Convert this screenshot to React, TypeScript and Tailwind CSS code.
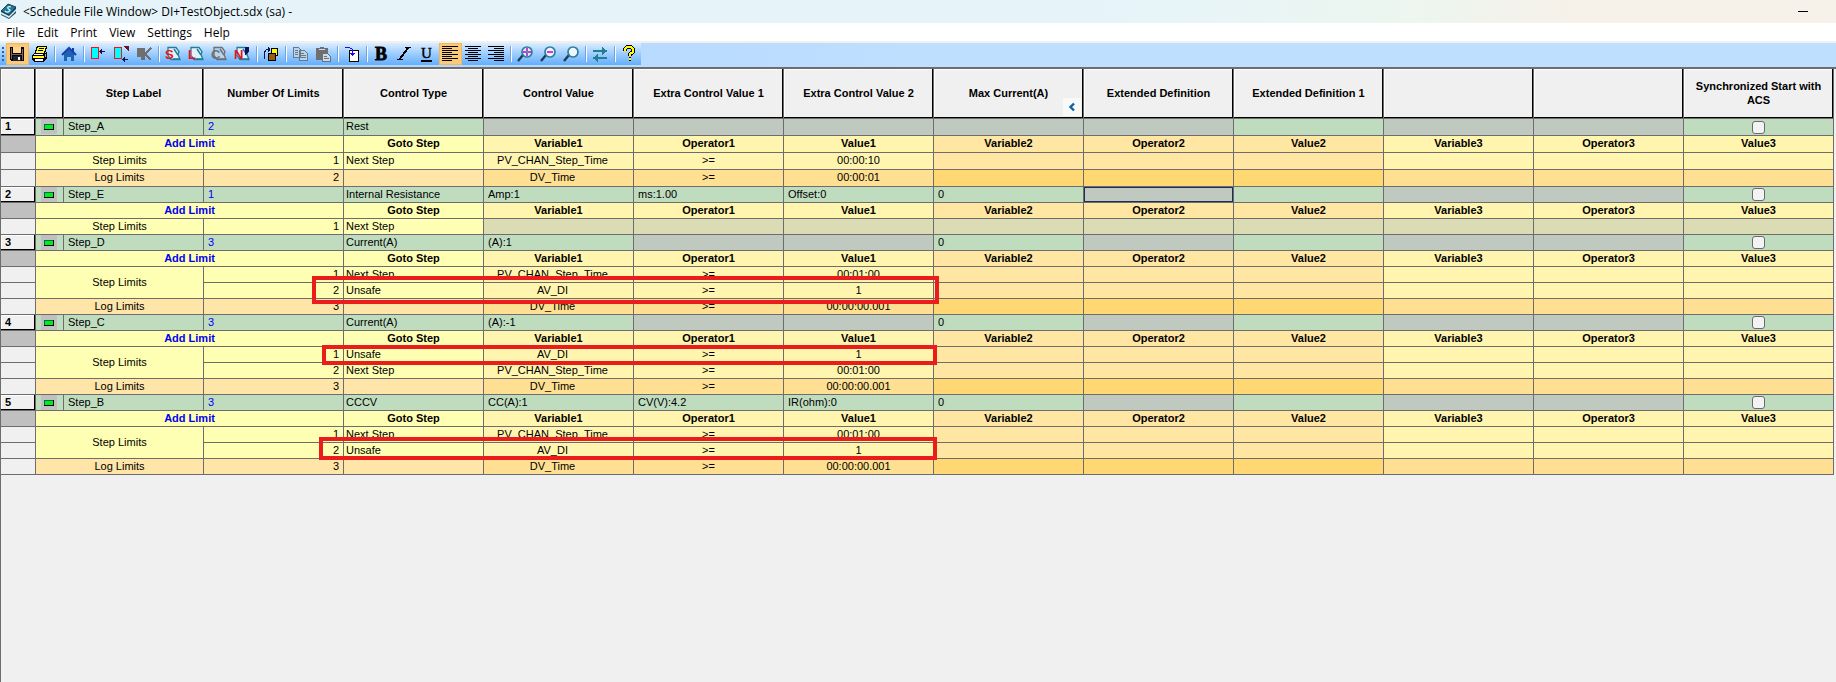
import React from 'react';

type Limit = { n: number; goto?: string; variable?: string; op?: string; value?: string };
type Step = {
  label: string;
  type: string;
  control: (string | null)[];
  stepLimits: Limit[];
  logLimits: Limit[];
  tall?: boolean;
  selected?: boolean;
};

const steps: Step[] = [
  {
    label: 'Step_A',
    type: 'Rest',
    control: [null, null, null, null],
    stepLimits: [{ n: 1, goto: 'Next Step', variable: 'PV_CHAN_Step_Time', op: '>=', value: '00:00:10' }],
    logLimits: [{ n: 2, variable: 'DV_Time', op: '>=', value: '00:00:01' }],
    tall: true,
  },
  {
    label: 'Step_E',
    type: 'Internal Resistance',
    control: ['Amp:1', 'ms:1.00', 'Offset:0', '0'],
    stepLimits: [{ n: 1, goto: 'Next Step' }],
    logLimits: [],
    selected: true,
  },
  {
    label: 'Step_D',
    type: 'Current(A)',
    control: ['(A):1', null, null, '0'],
    stepLimits: [
      { n: 1, goto: 'Next Step', variable: 'PV_CHAN_Step_Time', op: '>=', value: '00:01:00' },
      { n: 2, goto: 'Unsafe', variable: 'AV_DI', op: '>=', value: '1' },
    ],
    logLimits: [{ n: 3, variable: 'DV_Time', op: '>=', value: '00:00:00.001' }],
  },
  {
    label: 'Step_C',
    type: 'Current(A)',
    control: ['(A):-1', null, null, '0'],
    stepLimits: [
      { n: 1, goto: 'Unsafe', variable: 'AV_DI', op: '>=', value: '1' },
      { n: 2, goto: 'Next Step', variable: 'PV_CHAN_Step_Time', op: '>=', value: '00:01:00' },
    ],
    logLimits: [{ n: 3, variable: 'DV_Time', op: '>=', value: '00:00:00.001' }],
  },
  {
    label: 'Step_B',
    type: 'CCCV',
    control: ['CC(A):1', 'CV(V):4.2', 'IR(ohm):0', '0'],
    stepLimits: [
      { n: 1, goto: 'Next Step', variable: 'PV_CHAN_Step_Time', op: '>=', value: '00:01:00' },
      { n: 2, goto: 'Unsafe', variable: 'AV_DI', op: '>=', value: '1' },
    ],
    logLimits: [{ n: 3, variable: 'DV_Time', op: '>=', value: '00:00:00.001' }],
  },
];

const headers = [
  '', '', 'Step Label', 'Number Of Limits', 'Control Type', 'Control Value',
  'Extra Control Value 1', 'Extra Control Value 2', 'Max Current(A)',
  'Extended Definition', 'Extended Definition 1', '', '', 'Synchronized Start with ACS',
];

const limitHeads = [
  'Variable1', 'Operator1', 'Value1', 'Variable2', 'Operator2', 'Value2', 'Variable3', 'Operator3', 'Value3',
];

const cell = 'border-r border-b border-[#6d6d6d] p-0 whitespace-nowrap overflow-hidden';
const raised = 'bg-[#f0f0f0] shadow-[inset_-1px_-1px_0_#000,inset_1px_1px_0_#fff]';
const green = 'bg-[#bfdcbf]';
const grey = 'bg-[#bfc9bf]';

const stepTone = (i: number) => (i >= 3 && i < 6 ? 'bg-[#ffe6a3]' : 'bg-[#fff5ae]');
const logTone = (i: number) => (i >= 3 && i < 6 ? 'bg-[#ffd873]' : 'bg-[#ffdf91]');

function StepRows({ step, index }: { step: Step; index: number }) {
  const h = step.tall ? 'h-[17px] align-top' : 'h-4 align-top';
  const limitRow = (limit: Limit, i: number, kind: 'step' | 'log', group: Limit[]) => {
    const left = kind === 'step' ? 'bg-[#ffffb3]' : 'bg-[#ffe5a8]';
    const values = [limit.variable, limit.op, limit.value];
    return (
      <tr key={kind + i} className={h}>
        <td className={`${cell} bg-[#f0f0f0]`} />
        {i === 0 && (
          <td
            colSpan={2}
            rowSpan={group.length}
            className={`${cell} ${left} text-center ${group.length > 1 ? 'align-middle' : ''}`}
          >
            {kind === 'step' ? 'Step Limits' : 'Log Limits'}
          </td>
        )}
        <td className={`${cell} ${left} pr-1 text-right`}>{limit.n}</td>
        <td className={`${cell} ${left} pl-0.5`}>{limit.goto}</td>
        {limitHeads.map((name, c) => (
          <td
            key={name}
            className={`${cell} text-center ${c % 3 === 0 ? 'pr-3' : ''} ${
              !limit.variable ? 'bg-[#dcdcb4]' : kind === 'step' ? stepTone(c) : logTone(c)
            }`}
          >
            {values[c]}
          </td>
        ))}
      </tr>
    );
  };

  return (
    <tbody>
      <tr className={h}>
        <th scope="row" className={`${cell} ${raised} pl-1 text-left font-bold`}>{index}</th>
        <td className={`${cell} ${green} pl-[5px]`}>
          <button aria-label={`Collapse ${step.label}`} className="block h-[15px] w-4 bg-[#c0c0c0]">
            <svg viewBox="0 0 16 15" className="block h-[15px] w-4" shapeRendering="crispEdges">
              <path d="M3 5h10v6H3z" fill="#000" />
              <path d="M3 5h9v5H3z" fill="#006a60" />
              <path d="M4 6h8v4H4z" fill="#00ee10" />
            </svg>
          </button>
        </td>
        <td className={`${cell} ${green} pl-1`}>{step.label}</td>
        <td className={`${cell} ${green} pl-1 text-[#0000ee]`}>{step.stepLimits.length + step.logLimits.length}</td>
        <td className={`${cell} ${green} pl-0.5`}>{step.type}</td>
        {step.control.map((v, i) => (
          <td key={i} className={`${cell} pl-1 ${v === null ? grey : green}`}>{v}</td>
        ))}
        <td className={`${cell} ${grey} ${step.selected ? 'shadow-[inset_0_0_0_1px_#1f2b58]' : ''}`} />
        <td className={`${cell} ${green}`} />
        <td className={`${cell} ${grey}`} />
        <td className={`${cell} ${grey}`} />
        <td className={`${cell} ${green} align-middle`}>
          <input
            type="checkbox"
            aria-label={`Synchronized Start with ACS, ${step.label}`}
            className="mx-auto block h-[13px] w-[13px] appearance-none rounded-[3px] border border-[#6a6a6a] bg-[#f3f3f3] checked:bg-[#0067c0]"
          />
        </td>
      </tr>
      <tr className={`${h} font-bold`}>
        <td className={`${cell} bg-[#c0c0c0]`} />
        <td colSpan={3} className={`${cell} bg-[#ffffb3] text-center`}>
          <button className="block w-full text-center font-bold text-[#0000ee]">Add Limit</button>
        </td>
        <td className={`${cell} bg-[#ffffb3] text-center`}>Goto Step</td>
        {limitHeads.map((name, i) => (
          <td key={name} className={`${cell} text-center ${stepTone(i)}`}>{name}</td>
        ))}
      </tr>
      {step.stepLimits.map((l, i) => limitRow(l, i, 'step', step.stepLimits))}
      {step.logLimits.map((l, i) => limitRow(l, i, 'log', step.logLimits))}
    </tbody>
  );
}

function Tool({ label, active, children }: { label: string; active?: boolean; children: React.ReactNode }) {
  return (
    <button
      aria-label={label}
      className={`h-[22px] w-[23px] shrink-0 pl-[3px] ${
        active ? 'bg-[#fcc978] shadow-[inset_0_0_0_1px_#f0b85c]' : ''
      }`}
    >
      <svg viewBox="0 0 16 16" className="block h-4 w-4 overflow-visible" shapeRendering="crispEdges" fill="none">
        {children}
      </svg>
    </button>
  );
}

const Sep = () => (
  <div className="flex h-4 w-1.5 shrink-0 justify-center">
    <div className="w-0.5 border-l border-[#6da5dc] bg-white" />
  </div>
);

function Page({ letter, muted }: { letter: string; muted?: boolean }) {
  const edge = muted ? '#707070' : '#1f7f95';
  const ink = muted ? '#707070' : '#e8101c';
  return (
    <>
      <path d="M3 1.500h8l3 4-1 3 2 5H6l-3-4z" fill={muted ? '#b8d4f0' : '#e2f2fa'} stroke={edge} strokeWidth="1.300" shapeRendering="auto" />
      <path d="M9 3l4 6M8 13h7" stroke={edge} strokeWidth="1.500" shapeRendering="auto" />
      <text
        x="0" y="13" fontSize="13" fontWeight="bold" fontFamily="Liberation Sans, sans-serif"
        fill={ink}
      >
        {letter}
      </text>
    </>
  );
}

function Lines({ align }: { align: 'left' | 'center' | 'right' }) {
  const widths = [16, 10, 16, 10, 16, 10, 16, 10];
  return (
    <>
      {widths.map((w, i) => (
        <rect
          key={i}
          y={i * 2}
          width={w}
          height="1"
          fill="#000"
          x={align === 'left' ? 0 : align === 'right' ? 16 - w : (16 - w) / 2}
        />
      ))}
    </>
  );
}

function Lens({ fill, children }: { fill: string; children?: React.ReactNode }) {
  return (
    <>
      <path d="M1 15l5-6" stroke="#1c3c50" strokeWidth="2.4" shapeRendering="auto" />
      <circle cx="10" cy="6" r="5" fill={fill} stroke="#2a8294" strokeWidth="1.7" shapeRendering="auto" />
      {children}
    </>
  );
}

function Toolbar() {
  return (
    <div className="border-t-2 border-[#f0f0f0] bg-linear-to-r from-[#a8d0ff] via-[#bfdfff] to-[#bfdfff]">
      <div className="flex h-6 w-[641px] flex-col">
        <div
          role="toolbar"
          aria-label="Main toolbar"
          className="flex h-[22px] items-center bg-linear-to-b from-[#dcedff] via-[#9bccff] to-[#64aefb]"
        >
          <svg viewBox="0 0 6 22" className="h-[22px] w-1.5 shrink-0" shapeRendering="crispEdges">
            <path d="M2 4h2v2H2zM2 8h2v2H2zM2 12h2v2H2zM2 16h2v2H2z" fill="#2a62a8" />
          </svg>
          <Tool label="Save" active>
            <path d="M1 1h14v14H2l-1-1z" fill="#000020" />
            <path d="M2 2h1v11H2zM13 3h1v11h-1zM3 8h10v1H3z" fill="#8a6820" />
            <path d="M4 1h8v6H4z" fill="#ffd58c" />
            <path d="M4 10h8v5H4z" fill="#20203a" />
            <path d="M9 11h2v3H9z" fill="#fff" />
          </Tool>
          <Tool label="Print">
            <path d="M5 0h10v2l-2 6H3V6z" fill="#000" />
            <path d="M6 1h8l-2 6H4z" fill="#ffff20" />
            <path d="M7 2h5v1H7zM6 4h5v1H6z" fill="#000" />
            <path d="M2 7h11l2-2v7l-3 4H2l-2-3V9z" fill="#000" />
            <path d="M2 8h9v1H2z" fill="#fff" />
            <path d="M1 10h11v2H1z" fill="#ffff20" />
            <path d="M3 13h8v2H3z" fill="#fff" />
            <path d="M13 8h1v3h-1z" fill="#a8a8a8" />
          </Tool>
          <Sep />
          <Tool label="Home">
            <path d="M3 8l5-5 5 5v7h-3v-4H6v4H3z" fill="#1f62ae" shapeRendering="auto" />
            <path d="M1 9l7-7 7 7M12 2v4" stroke="#173cb0" strokeWidth="2" shapeRendering="auto" />
          </Tool>
          <Sep />
          <Tool label="Insert step">
            <path d="M1.500 1.500h7v11h-7z" fill="#00ffff" stroke="#ee1515" />
            <path d="M9 5h6v1H9zM10 4h1v3h-1zM11 3h1v5h-1z" fill="#15154e" />
          </Tool>
          <Tool label="Append step">
            <path d="M1.500 1.500h7v11h-7z" fill="#00ffff" stroke="#ee1515" />
            <path d="M10 0h6v6z" fill="#6b1030" />
            <path d="M9 13h6v1H9zM10 12h1v3h-1zM11 11h1v5h-1z" fill="#15154e" />
          </Tool>
          <Tool label="Delete step">
            <path d="M1 2h8v12H5v-3H1z" fill="#6f6f6f" />
            <path d="M15 2L9 8l6 6" stroke="#6f6f6f" strokeWidth="1.500" />
          </Tool>
          <Sep />
          <Tool label="Add step limit"><Page letter="S" /></Tool>
          <Tool label="Add log limit"><Page letter="L" /></Tool>
          <Tool label="Copy limit"><Page letter="C" muted /></Tool>
          <Tool label="New limit">
            <Page letter="N" />
            <path d="M11 1h4v4l-4 4z" fill="#101060" />
          </Tool>
          <Sep />
          <Tool label="Move">
            <path d="M8.500 2.500h6v7h-6z" fill="#ffff00" stroke="#000" />
            <path d="M5.500 7.500h7v7h-7z" fill="#9a5a18" stroke="#000" />
            <path d="M1 5h1v8H1zM2 4h1v2H2zM3 3h3v1H3zM5 1h1v5H5zM6 2h1v3H6z" fill="#10104a" />
          </Tool>
          <Sep />
          <Tool label="Copy">
            <path d="M1.500 1.500h5l2 2v8h-7zM7.500 4.500h5l3 3v7h-8z" fill="#b5d5f5" stroke="#6f7780" />
            <path d="M3 4h3v1H3zM3 6h3v1H3zM3 8h3v1H3zM9 7h3v1H9zM9 9h5v1H9zM9 11h5v1H9z" fill="#6f7780" />
          </Tool>
          <Tool label="Paste">
            <path d="M1 2h4V1h4v1h4v12H1z" fill="#6f6f6f" />
            <path d="M4 3h6v1H4z" fill="#c5dcf5" />
            <path d="M7.500 7.500h5l3 3v5h-8z" fill="#c5dcf5" stroke="#6f6f6f" />
            <path d="M9 10h3v1H9zM9 12h5v1H9z" fill="#6f6f6f" />
          </Tool>
          <Sep />
          <Tool label="Import">
            <path d="M5.500 4.500h9v11h-9z" fill="#fff" stroke="#000" strokeWidth="1.500" />
            <path d="M1 1h5v1H1zM6 2h2v1H6zM8 3h1v5H8zM6 7h5v1H6zM7 8h3v1H7zM8 9h1v1H8z" fill="#2000ff" />
          </Tool>
          <Sep />
          <Tool label="Bold">
            <text x="2" y="14" fontSize="18" fontWeight="bold" fontFamily="Liberation Serif, serif" fill="#000" stroke="#000" strokeWidth="0.800">B</text>
          </Tool>
          <Tool label="Italic">
            <path d="M9 1h6v1H9zM1 13h6v1H1z" fill="#000" />
            <path d="M12.500 1.500l-9 12" stroke="#000" strokeWidth="2" />
          </Tool>
          <Tool label="Underline">
            <text x="2" y="12" fontSize="15" fontFamily="Liberation Serif, serif" fill="#000" stroke="#000" strokeWidth="0.400">U</text>
            <path d="M2 14h11v2H2z" fill="#000" />
          </Tool>
          <Tool label="Align left" active><Lines align="left" /></Tool>
          <Tool label="Align center"><Lines align="center" /></Tool>
          <Tool label="Align right"><Lines align="right" /></Tool>
          <Sep />
          <Tool label="Zoom in">
            <Lens fill="#e8e8ff">
              <path d="M9 2h2v8H9zM6 5h8v2H6z" fill="#c838f0" />
              <path d="M9 5h2v2H9z" fill="#20c040" />
            </Lens>
          </Tool>
          <Tool label="Zoom out">
            <Lens fill="#eef0ff"><path d="M7 5h6v2H7z" fill="#c838f0" /></Lens>
          </Tool>
          <Tool label="Zoom reset"><Lens fill="#eef5ff" /></Tool>
          <Sep />
          <Tool label="Swap">
            <path d="M1 4h10v2H1zM10 1h1v8h-1zM11 2h1v6h-1zM12 3h1v4h-1zM13 4h2v2h-2z" fill="#237f90" />
            <path d="M5 11h10v2H5zM5 8h1v8H5zM4 9h1v6H4zM3 10h1v4H3zM1 11h2v2H1z" fill="#237f90" />
          </Tool>
          <Sep />
          <Tool label="Help">
            <path d="M4 5V3l2-2h4l2 2v3L9 8v2M8 13h2" stroke="#000" strokeWidth="4" />
            <path d="M4 5V3l2-2h4l2 2v3L9 8v2M8 13h2" stroke="#ffff00" strokeWidth="2" />
          </Tool>
        </div>
      </div>
    </div>
  );
}

export default function App() {
  return (
    <div className="flex min-h-screen flex-col bg-[#f0f0f0] text-black">
      <header className="flex h-[23px] items-center bg-linear-to-r from-[#e6f4fa] from-60% via-[#ecf6f0] via-76% to-[#f6f1e9] to-86% font-['Open_Sans',sans-serif]">
        <svg viewBox="0 0 17 17" className="h-[17px] w-[17px]">
          <path d="M1 8L8 1l8 3v6l-7 6-8-4z" fill="#174a66" />
          <path d="M1 8l7-7 8 3-7 8z" fill="#1e7898" stroke="#123448" strokeWidth="0.800" />
          <path d="M1 9l8 4 7-7v2l-7 7-8-4z" fill="#dfe8ec" />
          <path d="M11 4c-2-1-4 0-3 1.500s3 1 1.500 2.500S6 9 5 8" stroke="#d8f2fa" strokeWidth="1.300" fill="none" />
        </svg>
        <h1 className="flex-1 pl-1.5 text-[12px] leading-4">&lt;Schedule File Window&gt; DI+TestObject.sdx (sa) -</h1>
        <button aria-label="Minimize" className="mr-2.5 flex h-full w-[46px] items-center justify-center">
          <span className="h-px w-2.5 bg-black" />
        </button>
      </header>

      <nav className="flex h-[18px] items-end bg-white font-['Open_Sans',sans-serif] text-[12px] leading-4">
        {['File', 'Edit', 'Print', 'View', 'Settings', 'Help'].map((m) => (
          <button key={m} className="px-1.5">{m}</button>
        ))}
      </nav>

      <Toolbar />

      <main className="flex-1 border-t-2 border-l border-[#6d6d6d] font-['Liberation_Sans',Arial,sans-serif] text-[11px] leading-[15px]">
        <div className="relative mr-0.5">
          <table className="w-full table-fixed border-separate border-spacing-0">
            <colgroup>
              <col className="w-[35px]" />
              <col className="w-[28px]" />
              {[0, 1, 2].map((i) => <col key={i} className="w-[140px]" />)}
              {limitHeads.map((n) => <col key={n} />)}
            </colgroup>
            <thead>
              <tr className="h-[50px]">
                {headers.map((h, i) => (
                  <th
                    key={i}
                    scope="col"
                    className={`relative border-r border-b border-[#6d6d6d] px-0 pt-0 pb-0.5 text-center leading-[14px] font-bold ${raised}`}
                  >
                    {h}
                    {h === 'Max Current(A)' && (
                      <button
                        aria-label="Collapse columns"
                        className="absolute right-0.5 bottom-0.5 flex h-[18px] w-[18px] items-center justify-center bg-[#f7faf7]"
                      >
                        <svg viewBox="0 0 8 10" className="h-2.5 w-2" fill="none">
                          <path d="M6 1.500L2.500 5 6 8.500" stroke="#0a63a8" strokeWidth="2.400" />
                        </svg>
                      </button>
                    )}
                  </th>
                ))}
              </tr>
            </thead>
            {steps.map((s, i) => <StepRows key={s.label} step={s} index={i + 1} />)}
          </table>
          <div className="pointer-events-none absolute top-[207px] left-[311px] h-7 w-[627px] border-4 border-[#ea1c1c]" />
          <div className="pointer-events-none absolute top-[276px] left-[321px] h-5 w-[615px] border-4 border-[#ea1c1c]" />
          <div className="pointer-events-none absolute top-[368px] left-[318px] h-[23px] w-[618px] border-4 border-[#ea1c1c]" />
        </div>
      </main>
    </div>
  );
}
